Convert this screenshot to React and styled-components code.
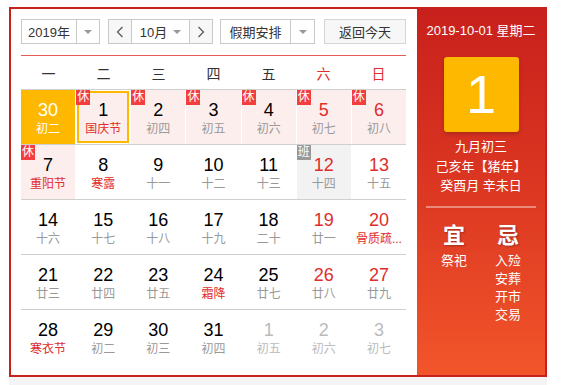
import styled, { createGlobalStyle } from 'styled-components';

const GlobalStyle = createGlobalStyle`
  body {
    margin: 0;
    background: #fff;
    font-family: 'Liberation Sans', Arial, 'Noto Sans CJK SC', sans-serif;
  }
`;

const Page = styled.div`
  padding: 7px 0 0 9px;
`;

const Calendar = styled.div`
  display: flex;
  width: 538px;
  height: 370px;
  box-sizing: border-box;
  border: 2px solid #c8201c;
`;

const Main = styled.div`
  width: 406px;
  flex-shrink: 0;
  padding: 10px 11px 0 10px;
  box-sizing: border-box;
`;

const Toolbar = styled.div`
  display: flex;
  height: 25px;
`;

const Select = styled.div`
  display: flex;
  box-sizing: border-box;
  border: 1px solid #c9c9c9;
  background: #fff;
  margin-right: ${(p) => p.$gap || 0}px;
  font-size: 13px;
  color: #333;
`;

const SelectText = styled.div`
  width: ${(p) => p.$w}px;
  display: flex;
  align-items: center;
  justify-content: center;
  gap: 6px;
`;

const SelectArrow = styled.div`
  width: ${(p) => p.$w || 22}px;
  border-left: 1px solid #c9c9c9;
  display: flex;
  align-items: center;
  justify-content: center;
`;

const Caret = styled.span`
  width: 0;
  height: 0;
  border-left: 4px solid transparent;
  border-right: 4px solid transparent;
  border-top: 4px solid #999;
`;

const StepButton = styled.div`
  width: 22px;
  display: flex;
  align-items: center;
  justify-content: center;
  background: #f7f7f7;
  border-${(p) => p.$side}: 1px solid #c9c9c9;
`;

const TodayButton = styled.div`
  width: 82px;
  box-sizing: border-box;
  border: 1px solid #d6d6d6;
  background: #f7f7f7;
  font-size: 13px;
  color: #333;
  display: flex;
  align-items: center;
  justify-content: center;
`;

const WeekHeader = styled.div`
  margin-top: 11px;
  display: grid;
  grid-template-columns: repeat(7, 1fr);
  height: 35px;
  box-sizing: border-box;
  border-top: 1px solid #e45c55;
  border-bottom: 1px solid #cfcfcf;
  align-items: center;
  font-size: 14px;
`;

const WeekDay = styled.div`
  text-align: center;
  color: ${(p) => (p.$weekend ? '#e02d2d' : '#333')};
`;

const Row = styled.div`
  display: grid;
  grid-template-columns: repeat(7, 1fr);
  column-gap: 1px;
  height: 55px;
  box-sizing: border-box;
  border-bottom: 1px solid #cfcfcf;
  &:last-child {
    border-bottom: none;
    height: 54px;
  }
`;

const cellBg = {
  today: '#ffb800',
  rest: '#fdeeee',
  work: '#f2f2f2',
  plain: 'transparent',
};

const Cell = styled.div`
  position: relative;
  display: flex;
  flex-direction: column;
  align-items: center;
  padding-top: 9px;
  min-width: 0;
  background: ${(p) => cellBg[p.$bg]};
  box-shadow: ${(p) => (p.$selected ? 'inset 0 0 0 1px #fff, inset 0 0 0 3px #ffb800' : 'none')};
`;

const numColor = {
  normal: '#000',
  red: '#e02d2d',
  white: '#fff',
  faded: '#bbb',
};

const DayNum = styled.div`
  font-size: 18px;
  line-height: 22px;
  color: ${(p) => numColor[p.$tone]};
`;

const lunarColor = {
  normal: '#999',
  red: '#e02d2d',
  white: '#fff',
  faded: '#bbb',
};

const Lunar = styled.div`
  font-size: 12px;
  line-height: 16px;
  white-space: nowrap;
  color: ${(p) => lunarColor[p.$tone]};
`;

const Badge = styled.span`
  position: absolute;
  top: 0;
  left: 0;
  width: 14px;
  height: 15px;
  font-size: 12px;
  line-height: 15px;
  text-align: center;
  color: #fff;
  background: ${(p) => (p.$work ? '#999' : '#f23e3e')};
`;

const Side = styled.div`
  flex: 1;
  background: linear-gradient(#c8201c, #dc3822 50%, #f2552a);
  color: #fff;
  display: flex;
  flex-direction: column;
  align-items: center;
  padding-top: 12px;
`;

const DateLine = styled.div`
  font-size: 13px;
  line-height: 20px;
`;

const BigDay = styled.div`
  margin-top: 16px;
  width: 75px;
  height: 75px;
  border-radius: 3px;
  background: #ffb800;
  box-shadow: 0 2px 4px rgba(0, 0, 0, 0.2);
  font-size: 54px;
  line-height: 75px;
  text-align: center;
`;

const LunarInfo = styled.div`
  margin-top: 5px;
  font-size: 13px;
  line-height: 19.5px;
  text-align: center;
`;

const Divider = styled.div`
  margin-top: 10px;
  width: 110px;
  height: 2px;
  background: rgba(255, 255, 255, 0.4);
`;

const Advice = styled.div`
  margin-top: 14px;
  display: flex;
  gap: 6px;
`;

const AdviceCol = styled.div`
  width: 48px;
  display: flex;
  flex-direction: column;
  align-items: center;
  font-size: 13px;
  line-height: 18px;
`;

const AdviceTitle = styled.div`
  font-size: 22px;
  line-height: 28px;
  font-weight: bold;
  margin-bottom: 2px;
  text-shadow: 1px 1px 2px rgba(0, 0, 0, 0.3);
`;

const Footer = styled.div`
  width: 538px;
  height: 10px;
  background: #f4f4f4;
`;

const Chevron = ({ dir }) => (
  <svg width="8" height="12" viewBox="0 0 8 12">
    <polyline
      points={dir === 'left' ? '6.5,1 1.5,6 6.5,11' : '1.5,1 6.5,6 1.5,11'}
      fill="none"
      stroke="#555"
      strokeWidth="1.2"
    />
  </svg>
);

// n: day, l: lunar/festival, bg: cell bg, t: number tone, lt: lunar tone
const weeks = [
  [
    { n: 30, l: '初二', bg: 'today', t: 'white', lt: 'white' },
    { n: 1, l: '国庆节', bg: 'rest', badge: '休', lt: 'red', sel: true },
    { n: 2, l: '初四', bg: 'rest', badge: '休' },
    { n: 3, l: '初五', bg: 'rest', badge: '休' },
    { n: 4, l: '初六', bg: 'rest', badge: '休' },
    { n: 5, l: '初七', bg: 'rest', badge: '休', t: 'red' },
    { n: 6, l: '初八', bg: 'rest', badge: '休', t: 'red' },
  ],
  [
    { n: 7, l: '重阳节', bg: 'rest', badge: '休', lt: 'red' },
    { n: 8, l: '寒露', lt: 'red' },
    { n: 9, l: '十一' },
    { n: 10, l: '十二' },
    { n: 11, l: '十三' },
    { n: 12, l: '十四', bg: 'work', badge: '班', t: 'red' },
    { n: 13, l: '十五', t: 'red' },
  ],
  [
    { n: 14, l: '十六' },
    { n: 15, l: '十七' },
    { n: 16, l: '十八' },
    { n: 17, l: '十九' },
    { n: 18, l: '二十' },
    { n: 19, l: '廿一', t: 'red' },
    { n: 20, l: '骨质疏...', t: 'red', lt: 'red' },
  ],
  [
    { n: 21, l: '廿三' },
    { n: 22, l: '廿四' },
    { n: 23, l: '廿五' },
    { n: 24, l: '霜降', lt: 'red' },
    { n: 25, l: '廿七' },
    { n: 26, l: '廿八', t: 'red' },
    { n: 27, l: '廿九', t: 'red' },
  ],
  [
    { n: 28, l: '寒衣节', lt: 'red' },
    { n: 29, l: '初二' },
    { n: 30, l: '初三' },
    { n: 31, l: '初四' },
    { n: 1, l: '初五', t: 'faded', lt: 'faded' },
    { n: 2, l: '初六', t: 'faded', lt: 'faded' },
    { n: 3, l: '初七', t: 'faded', lt: 'faded' },
  ],
];

const weekNames = ['一', '二', '三', '四', '五', '六', '日'];

export default function App() {
  return (
    <Page>
      <GlobalStyle />
      <Calendar>
        <Main>
          <Toolbar>
            <Select $gap={8}>
              <SelectText $w={54}>2019年</SelectText>
              <SelectArrow $w={22}>
                <Caret />
              </SelectArrow>
            </Select>
            <Select $gap={7}>
              <StepButton $side="right">
                <Chevron dir="left" />
              </StepButton>
              <SelectText $w={57}>
                10月
                <Caret />
              </SelectText>
              <StepButton $side="left">
                <Chevron dir="right" />
              </StepButton>
            </Select>
            <Select $gap={9}>
              <SelectText $w={69}>假期安排</SelectText>
              <SelectArrow $w={23}>
                <Caret />
              </SelectArrow>
            </Select>
            <TodayButton>返回今天</TodayButton>
          </Toolbar>

          <WeekHeader>
            {weekNames.map((w, i) => (
              <WeekDay key={w} $weekend={i > 4}>
                {w}
              </WeekDay>
            ))}
          </WeekHeader>

          {weeks.map((week, wi) => (
            <Row key={wi}>
              {week.map((d, di) => (
                <Cell key={di} $bg={d.bg || 'plain'} $selected={d.sel}>
                  {d.badge && <Badge $work={d.badge === '班'}>{d.badge}</Badge>}
                  <DayNum $tone={d.t || 'normal'}>{d.n}</DayNum>
                  <Lunar $tone={d.lt || 'normal'}>{d.l}</Lunar>
                </Cell>
              ))}
            </Row>
          ))}
        </Main>

        <Side>
          <DateLine>2019-10-01 星期二</DateLine>
          <BigDay>1</BigDay>
          <LunarInfo>
            九月初三
            <br />
            己亥年【猪年】
            <br />
            癸酉月 辛未日
          </LunarInfo>
          <Divider />
          <Advice>
            <AdviceCol>
              <AdviceTitle>宜</AdviceTitle>
              <div>祭祀</div>
            </AdviceCol>
            <AdviceCol>
              <AdviceTitle>忌</AdviceTitle>
              <div>入殓</div>
              <div>安葬</div>
              <div>开市</div>
              <div>交易</div>
            </AdviceCol>
          </Advice>
        </Side>
      </Calendar>
      <Footer />
    </Page>
  );
}
